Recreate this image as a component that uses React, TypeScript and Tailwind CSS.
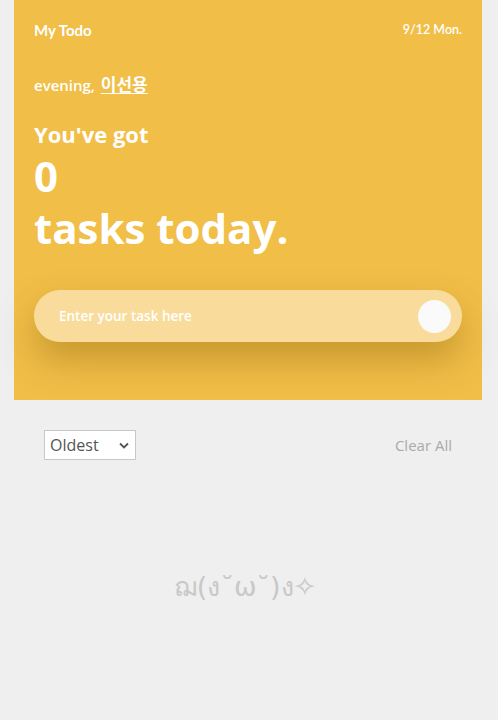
import React from "react";

export default function App() {
  return (
    <div className="min-h-[720px] w-full bg-[#efefef]" style={{ fontFamily: "'Open Sans', 'Noto Sans CJK KR', sans-serif" }}>
      <div className="ml-[14px] h-[400px] w-[468px] bg-[#f1be47] px-5 pt-[19px] text-white">
        <div className="flex items-center justify-between">
          <div className="font-['Lato'] text-[15px] font-bold">My Todo</div>
          <div className="font-['Lato'] text-[12.5px] font-semibold">9/12 Mon.</div>
        </div>
        <div className="mt-[29px] text-[15px] font-semibold">
          evening, <span className="ml-[2px] text-[17px] underline underline-offset-2" style={{ fontFamily: "'Noto Sans CJK KR', sans-serif" }}>이선용</span>
        </div>
        <div className="mt-[23px] text-[22px] font-bold leading-[30px]">You've got</div>
        <div className="text-[42px] font-bold leading-[54px]">0</div>
        <div className="text-[42px] font-bold leading-[50px]">tasks today.</div>
        <div className="mt-[37px] flex h-[52px] items-center justify-between rounded-full bg-[#f9dc9c] pl-[25px] pr-[11px] shadow-[0_18px_36px_rgba(120,80,0,0.35)]">
          <span className="text-[13.5px] font-semibold text-white">Enter your task here</span>
          <span className="h-[33px] w-[33px] rounded-full bg-[#fafafa]" />
        </div>
      </div>
      <div className="flex items-center justify-between px-[44px] pt-[30px]">
        <div className="flex h-[30px] w-[92px] items-center justify-between border border-[#c8c8c8] bg-white pl-[5px] pr-[6px] text-[16px] text-[#555]">
          <span>Oldest</span>
          <svg width="10" height="7" viewBox="0 0 10 7"><path d="M1 1.5 L5 5.5 L9 1.5" stroke="#555" strokeWidth="1.8" fill="none" /></svg>
        </div>
        <div className="mr-[2px] text-[15px] text-[#aaa]">Clear All</div>
      </div>
      <div className="mt-[107px] pr-[8px] text-center text-[27px] text-[#c8c8c8]" style={{ fontFamily: "'DejaVu Sans', 'Noto Sans', sans-serif" }}>
        ฌ(ง˘ω˘)ง✧
      </div>
    </div>
  );
}
